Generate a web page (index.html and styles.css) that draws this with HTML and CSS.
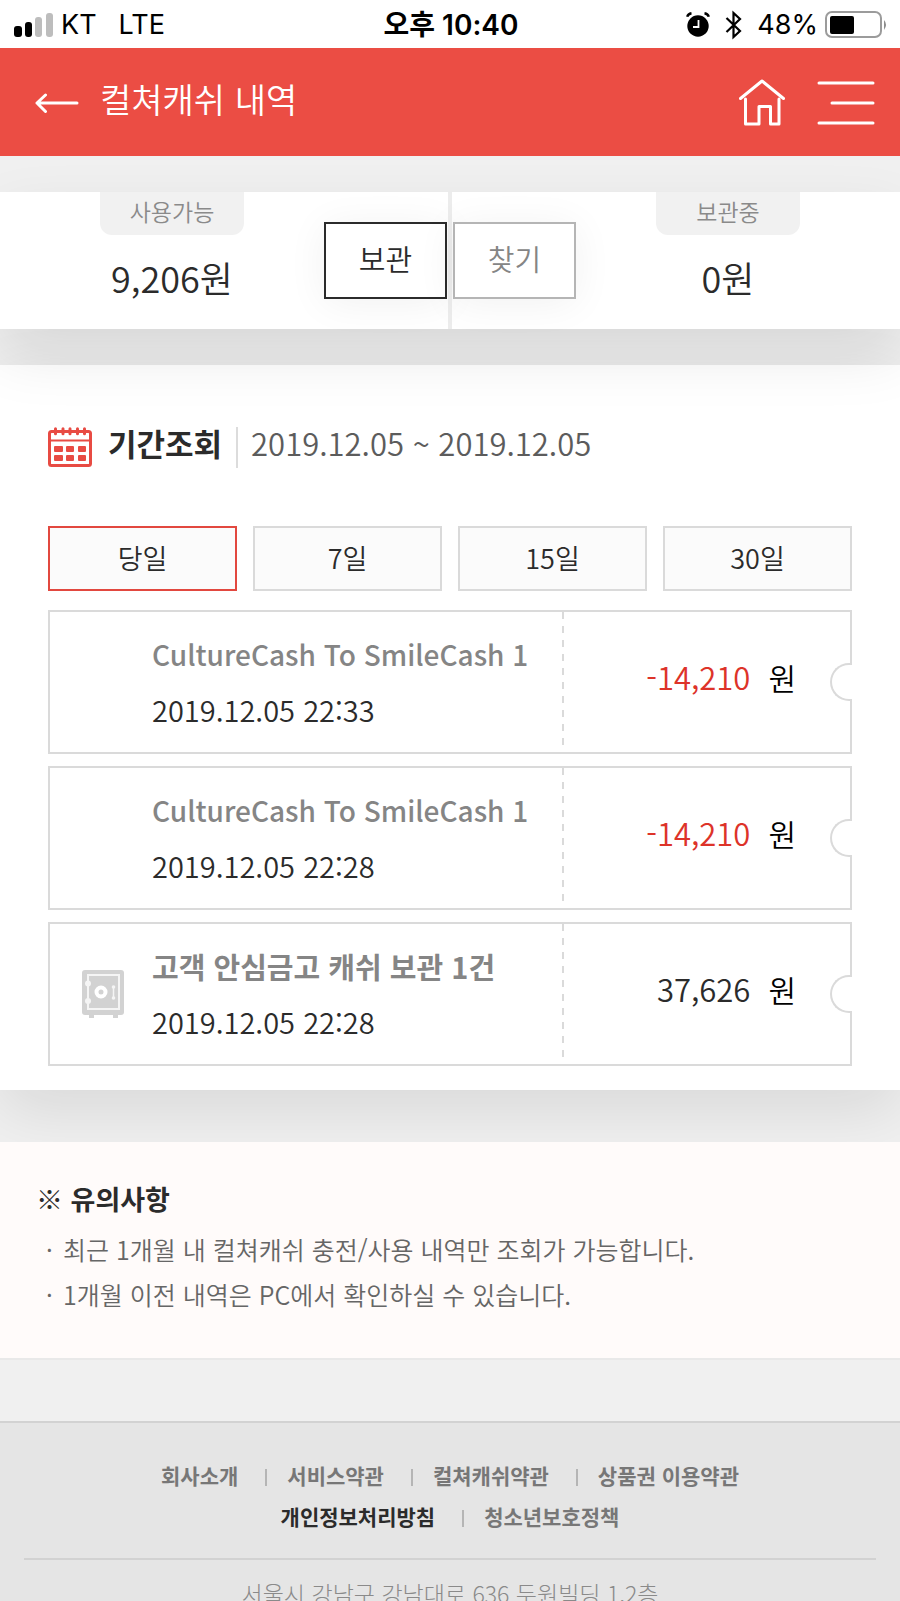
FILE: index.html
```html
<!DOCTYPE html>
<html lang="ko">
<head>
<meta charset="utf-8">
<meta name="viewport" content="width=device-width, initial-scale=1">
<title>컬쳐캐쉬 내역</title>
<link rel="stylesheet" href="styles.css">
</head>
<body>
<div class="status">
  <div class="status-side">
    <svg class="signal" width="39" height="24" viewBox="0 0 39 24" aria-hidden="true">
      <rect x="0" y="13" width="8" height="11" rx="3"/><rect x="11" y="9" width="7" height="15" rx="3"/>
      <rect x="21" y="4" width="7" height="20" rx="3" fill="#bdbdbd"/><rect x="32" y="0" width="7" height="24" rx="3" fill="#bdbdbd"/>
    </svg>
    <span class="carrier">KT</span><span>LTE</span>
  </div>
  <div class="clock">오후 10:40</div>
  <div class="status-side status-end">
    <svg width="24" height="26" viewBox="0 0 24 26" aria-hidden="true">
      <circle cx="12" cy="14" r="10.7"/><path d="M1.200 4.800Q2 1.800 5.500 1.200M22.800 4.800Q22 1.800 18.500 1.200" fill="none" stroke="#000" stroke-width="2.400"/>
      <path d="M12.500 8v7H7" fill="none" stroke="#fff" stroke-width="1.800"/>
    </svg>
    <svg class="bluetooth" width="18" height="30" viewBox="0 0 18 30" aria-hidden="true">
      <path d="M1.500 8 15 21 8.500 27V3L15 9 1.500 22" fill="none" stroke="#000" stroke-width="2.200"/>
    </svg>
    <span>48%</span>
    <svg class="battery" width="63" height="28" viewBox="0 0 63 28" aria-hidden="true">
      <rect x="1" y="1" width="55" height="25" rx="6" fill="none" stroke="#9b9b9b" stroke-width="2"/>
      <rect x="5" y="5" width="24" height="18" rx="2"/><path d="M59 9q4 4.500 0 10z" fill="#8c8c8c"/>
    </svg>
  </div>
</div>

<header class="header">
  <button class="icon-button" type="button" aria-label="뒤로">
    <svg width="44" height="20" viewBox="0 0 44 20"><path d="M10.500 2 2 10l8.500 8.500M2 10h40"/></svg>
  </button>
  <h1 class="page-title">컬쳐캐쉬 내역</h1>
  <button class="icon-button" type="button" aria-label="홈">
    <svg width="48" height="48" viewBox="0 0 48 48"><path d="M2.500 19.500 24 2l21.500 17.500M7.500 20v25H21V27.500h11.500V45H41V20"/></svg>
  </button>
  <button class="icon-button menu-button" type="button" aria-label="메뉴">
    <svg width="58" height="44" viewBox="0 0 58 44"><path d="M2 2h54M15 22h41M2 42h54"/></svg>
  </button>
</header>

<section class="balance" aria-label="잔액">
  <div class="account"><span class="account-label">사용가능</span><strong class="account-value">9,206원</strong></div>
  <button class="transfer transfer-on" type="button">보관</button>
  <span class="balance-divider"></span>
  <button class="transfer" type="button">찾기</button>
  <div class="account"><span class="account-label">보관중</span><strong class="account-value">0원</strong></div>
</section>

<main class="history">
  <div class="period">
    <svg width="44" height="40" viewBox="0 0 44 40" aria-hidden="true">
      <rect x="1.500" y="4.500" width="41" height="34" rx="2" fill="#fff" stroke="#e84b43" stroke-width="3"/>
      <path d="M1 13.500h42" stroke="#e84b43" stroke-width="2"/>
      <path d="M7.500 1.800v5M15 1.800v5M22 1.800v5M29.500 1.800v5M36.500 1.800v5" stroke="#e84b43" stroke-width="3" stroke-linecap="round"/>
      <g fill="#e84b43"><rect x="6" y="19" width="9" height="6" rx="1"/><rect x="18" y="19" width="8" height="6" rx="1"/><rect x="30" y="19" width="8" height="6" rx="1"/><rect x="6" y="28" width="9" height="6" rx="1"/><rect x="18" y="28" width="8" height="6" rx="1"/><rect x="30" y="28" width="8" height="6" rx="1"/></g>
    </svg>
    <h2 class="period-title">기간조회</h2>
    <span class="period-range">2019.12.05 ~ 2019.12.05</span>
  </div>
  <div class="tabs">
    <button class="tab tab-on" type="button">당일</button>
    <button class="tab" type="button">7일</button>
    <button class="tab" type="button">15일</button>
    <button class="tab" type="button">30일</button>
  </div>
  <ul class="tickets">
    <li class="ticket">
      <div class="ticket-icon"></div>
      <div class="ticket-info"><h3 class="ticket-title latin">CultureCash To SmileCash 1</h3><time class="ticket-time">2019.12.05 22:33</time></div>
      <div class="ticket-amount"><span class="minus">-14,210</span><span class="won">원</span></div>
    </li>
    <li class="ticket">
      <div class="ticket-icon"></div>
      <div class="ticket-info"><h3 class="ticket-title latin">CultureCash To SmileCash 1</h3><time class="ticket-time">2019.12.05 22:28</time></div>
      <div class="ticket-amount"><span class="minus">-14,210</span><span class="won">원</span></div>
    </li>
    <li class="ticket">
      <div class="ticket-icon">
        <svg width="42" height="48" viewBox="0 0 42 48" aria-hidden="true">
          <rect width="42" height="45" rx="3" fill="#d2d2d2"/><path d="M7 44h5v4H7zM31 44h5v4h-5z" fill="#d2d2d2"/>
          <rect x="6" y="5" width="31" height="34" fill="none" stroke="#f5f5f5" stroke-width="2"/>
          <circle cx="19" cy="22" r="4.500" fill="none" stroke="#fff" stroke-width="4"/>
          <path d="M31.500 17v11" stroke="#f5f5f5" stroke-width="1.500"/>
          <g fill="#f5f5f5"><circle cx="31.500" cy="17" r="1.800"/><circle cx="31.500" cy="28" r="1.800"/><circle cx="6" cy="13.500" r="3"/><circle cx="6" cy="31" r="3"/></g>
        </svg>
      </div>
      <div class="ticket-info"><h3 class="ticket-title">고객 안심금고 캐쉬 보관 1건</h3><time class="ticket-time">2019.12.05 22:28</time></div>
      <div class="ticket-amount"><span>37,626</span><span class="won">원</span></div>
    </li>
  </ul>
</main>

<section class="notice">
  <h2 class="notice-title">※ 유의사항</h2>
  <ul class="notice-list">
    <li>최근 1개월 내 컬쳐캐쉬 충전/사용 내역만 조회가 가능합니다.</li>
    <li>1개월 이전 내역은 PC에서 확인하실 수 있습니다.</li>
  </ul>
</section>

<footer class="footer">
  <nav class="footer-nav">
    <div class="footer-row"><a href="#">회사소개</a><a href="#">서비스약관</a><a href="#">컬쳐캐쉬약관</a><a href="#">상품권 이용약관</a></div>
    <div class="footer-row"><a class="privacy" href="#">개인정보처리방침</a><a href="#">청소년보호정책</a></div>
  </nav>
  <p class="address">서울시 강남구 강남대로 636 두원빌딩 1,2층</p>
</footer>
</body>
</html>
```
FILE: styles.css
```css
*, *::before, *::after { box-sizing: border-box; }
body {
  margin: 0;
  background: #f0f0f0;
  color: #2b2b2b;
  font-family: "Noto Sans CJK KR", sans-serif;
  font-weight: 350;
}
h1, h2, h3, p, ul { margin: 0; padding: 0; }
ul { list-style: none; }
svg { display: block; flex: none; }
button { font: inherit; color: inherit; padding: 0; margin: 0; border-radius: 0; cursor: pointer; }
a { color: inherit; text-decoration: none; }

.status {
  position: relative;
  z-index: 3;
  display: flex;
  align-items: center;
  height: 48px;
  padding: 0 12px 0 14px;
  background: #fff;
  color: #000;
  font: 400 27px/48px Inter, "Noto Sans CJK KR", sans-serif;
}
.status-side { flex: 1 1 0; display: flex; align-items: center; padding-top: 2px; line-height: 46px; }
.status-end { justify-content: flex-end; padding-top: 1px; }
.clock { padding-top: 2px; font-size: 28px; line-height: 46px; font-weight: 600; }
.carrier { margin: 0 22px 0 8px; }
.bluetooth { margin: 0 14px 0 15px; }
.battery { margin-left: 7px; }

.header {
  position: relative;
  z-index: 3;
  display: flex;
  align-items: center;
  height: 108px;
  padding: 2px 25px 0 35px;
  background: #eb4d44;
  color: #fff;
}
.page-title { flex: 1; margin: 0 0 8px 21px; font-size: 34px; line-height: 48px; font-weight: 350; }
.icon-button { background: none; border: 0; }
.icon-button path { fill: none; stroke: #fff; stroke-width: 3; stroke-linecap: round; stroke-linejoin: round; }
.menu-button { margin-left: 31px; }

.balance {
  position: relative;
  z-index: 2;
  display: flex;
  align-items: center;
  height: 137px;
  margin: 36px 0;
  padding: 0 20px;
  background: #fff;
  box-shadow: 0 25px 60px rgba(0, 0, 0, .1);
}
.account { flex: 1; align-self: stretch; display: flex; flex-direction: column; align-items: center; }
.account-label {
  width: 144px;
  height: 43px;
  border-radius: 0 0 12px 12px;
  background: #f1f1f1;
  color: #8a8a8a;
  font-size: 23px;
  line-height: 38px;
  text-align: center;
}
.account-value { margin-top: 18px; font-size: 36px; line-height: 48px; font-weight: 350; }
.balance-divider { align-self: stretch; width: 4px; margin: 0 1px; background: #ececec; }
.transfer {
  width: 123px;
  height: 77px;
  padding-bottom: 6px;
  border: 2px solid #b5b5b5;
  background: #fff;
  color: #858585;
  font-size: 29px;
  box-shadow: 0 4px 40px rgba(0, 0, 0, .06);
}
.transfer-on { border-color: #2b2b2b; color: #2b2b2b; }

.history {
  position: relative;
  z-index: 1;
  padding: 56px 48px 24px;
  background: #fff;
  box-shadow: 0 20px 60px rgba(0, 0, 0, .1);
}
.period { display: flex; align-items: center; height: 52px; }
.period-title { margin: 0 14px 8px 16px; font-size: 31px; line-height: 44px; font-weight: 700; }
.period-range {
  padding: 0 0 10px 13px;
  border-left: 2px solid #dcdcdc;
  color: #5c5c5c;
  font-size: 31px;
  line-height: 31px;
}
.tabs { display: grid; grid-template-columns: repeat(4, 1fr); gap: 16px; margin-top: 53px; }
.tab { height: 65px; padding-bottom: 3px; border: 2px solid #dadada; background: #fbfbfb; font-size: 27px; }
.tab-on { border-color: #e2483f; }

.tickets { display: grid; gap: 12px; margin-top: 19px; }
.ticket { position: relative; display: flex; height: 144px; border: 2px solid #dadada; }
.ticket::after {
  content: "";
  position: absolute;
  top: 51px;
  right: -2px;
  width: 22px;
  height: 38px;
  border: 2px solid #dadada;
  border-right: 0;
  border-radius: 19px 0 0 19px;
  background: #fff;
}
.ticket-icon { width: 102px; padding: 46px 0 0 32px; }
.ticket-info { flex: 1; padding-top: 20px; }
.ticket-title { color: #858585; font-size: 29px; line-height: 44px; font-weight: 700; white-space: nowrap; }
.latin { font-size: 28px; font-weight: 500; }
.ticket-time { display: block; margin-top: 11px; font-size: 29px; line-height: 44px; }
.ticket-amount {
  display: flex;
  justify-content: flex-end;
  gap: 18px;
  width: 288px;
  padding: 43px 54px 0 0;
  background: repeating-linear-gradient(#dadada 0 7px, transparent 7px 14px) left / 2px 100% no-repeat;
  font-size: 31px;
  line-height: 44px;
}
.minus { color: #dd3329; }
.won { color: #000; font-size: 30px; }

.notice {
  position: relative;
  z-index: 2;
  margin-top: 52px;
  padding: 35px 36px 41px;
  border-bottom: 2px solid #e9e9e9;
  background: #fffbfa;
}
.notice-title { font-size: 27px; line-height: 44px; font-weight: 700; }
.notice-list { margin-top: 6px; color: #666; font-size: 25px; line-height: 45px; }
.notice-list li { display: flex; padding-left: 10px; }
.notice-list li::before { content: "·"; width: 17px; }

.footer {
  margin-top: 61px;
  padding: 32px 24px 0;
  border-top: 2px solid #d2d2d2;
  background: #e5e5e5;
}
.footer-nav { padding-bottom: 21px; border-bottom: 2px solid #d2d2d2; color: #777; font-size: 21px; line-height: 41px; font-weight: 700; }
.footer-row { display: flex; justify-content: center; align-items: center; }
.footer-row a { display: flex; align-items: center; }
.footer-row a + a::before { content: ""; width: 2px; height: 17px; margin: 4px 20px 0 27px; background: #b5b5b5; }
.footer-row .privacy { color: #2b2b2b; }
.address { padding: 13px 0 8px; color: #8a8a8a; font-size: 23px; line-height: 40px; font-weight: 300; text-align: center; }
```
